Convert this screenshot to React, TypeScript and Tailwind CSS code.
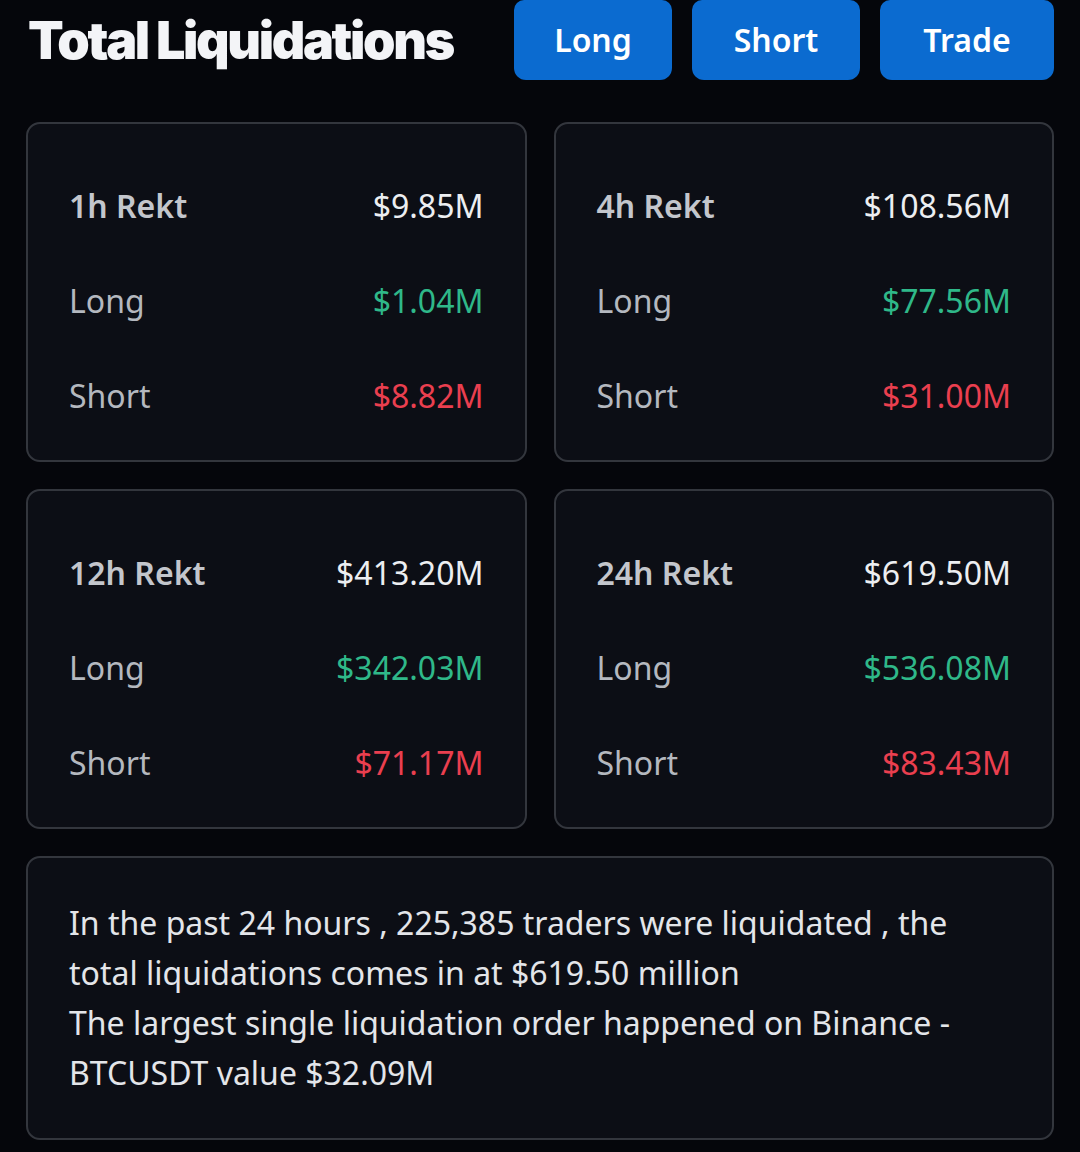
const cards = [
  { label: "1h Rekt", total: "$9.85M", long: "$1.04M", short: "$8.82M" },
  { label: "4h Rekt", total: "$108.56M", long: "$77.56M", short: "$31.00M" },
  { label: "12h Rekt", total: "$413.20M", long: "$342.03M", short: "$71.17M" },
  { label: "24h Rekt", total: "$619.50M", long: "$536.08M", short: "$83.43M" },
];

const buttons = [
  { text: "Long", w: "w-[158px]" },
  { text: "Short", w: "w-[168px]" },
  { text: "Trade", w: "w-[174px]" },
];

function StatCard({ label, total, long, short }: (typeof cards)[number]) {
  return (
    <div className="rounded-[14px] border-2 border-[#33363d] bg-[#0c0e15] px-[41px] pt-[34px] pb-[17px]">
      <div className="flex h-[95px] items-center justify-between">
        <span className="font-semibold text-[#c3c6cc]">{label}</span>
        <span className="text-[#eceef1]">{total}</span>
      </div>
      <div className="flex h-[95px] items-center justify-between">
        <span className="text-[#b4b8bf]">Long</span>
        <span className="text-[#2fb889]">{long}</span>
      </div>
      <div className="flex h-[95px] items-center justify-between">
        <span className="text-[#b4b8bf]">Short</span>
        <span className="text-[#ea3f4f]">{short}</span>
      </div>
    </div>
  );
}

export default function App() {
  return (
    <main
      className="min-h-[1152px] w-[1080px] bg-[#05060b] px-[26px] text-[32px]"
      style={{ fontFamily: '"Noto Sans", sans-serif' }}
    >
      <header className="flex h-[80px] items-center">
        <h1
          className="pt-[2px] pl-[2px] text-[52px] leading-none font-black tracking-[-0.045em] text-[#f3f4f7]"
          style={{ fontFamily: "Inter, sans-serif" }}
        >
          Total Liquidations
        </h1>
        <div className="ml-auto flex h-full gap-[20px]">
          {buttons.map((b) => (
            <button
              key={b.text}
              className={`flex h-full items-center justify-center rounded-b-[12px] rounded-t-[10px] bg-[#0b6bd0] font-semibold text-white ${b.w}`}
            >
              {b.text}
            </button>
          ))}
        </div>
      </header>

      <section className="mt-[42px] grid grid-cols-2 gap-[27px]">
        {cards.map((c) => (
          <StatCard key={c.label} {...c} />
        ))}
      </section>

      <section className="mt-[27px] rounded-[14px] border-2 border-[#33363d] bg-[#0c0e15] px-[41px] py-[40px] leading-[50px] text-[#e3e5e9]">
        <p>
          In the past 24 hours , 225,385 traders were liquidated , the
          <br />
          total liquidations comes in at $619.50 million
        </p>
        <p>
          The largest single liquidation order happened on Binance -
          <br />
          BTCUSDT value $32.09M
        </p>
      </section>
    </main>
  );
}
